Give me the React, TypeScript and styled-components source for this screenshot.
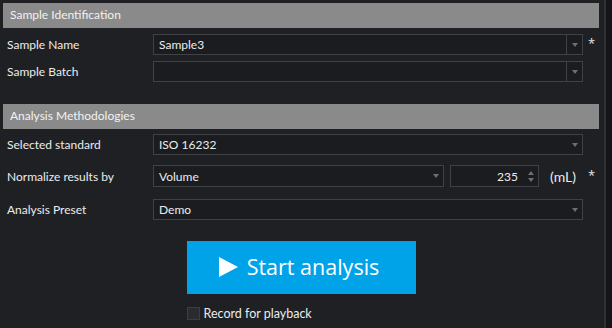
import React from 'react'
import styled, { createGlobalStyle } from 'styled-components'

const GlobalStyle = createGlobalStyle`
  html, body {
    margin: 0;
    padding: 0;
    background: #1f2024;
  }
  body {
    font-family: Lato, 'Open Sans', sans-serif;
    color: #e8e8e8;
  }
`

const Shell = styled.div`
  display: flex;
  width: 612px;
  height: 328px;
  overflow: hidden;
`

const Panel = styled.div`
  flex: 1;
  padding: 3px 5px 0 3px;
  border-right: 2px solid #303135;
  background: #1f2024;
`

const ScrollStrip = styled.div`
  width: 6px;
  background: #141518;
`

const SectionHeader = styled.div<{ $top?: number }>`
  height: 25px;
  line-height: 24px;
  margin-top: ${(p) => p.$top ?? 0}px;
  padding-left: 7px;
  background: #8a8a8a;
  color: #f2f2f2;
  font-size: 12px;
`

const SectionBody = styled.div<{ $pad: number }>`
  display: flex;
  flex-direction: column;
  padding-top: ${(p) => p.$pad}px;
`

const Row = styled.div<{ $gap?: number; $h?: number }>`
  display: flex;
  align-items: center;
  height: ${(p) => p.$h ?? 21}px;
  margin-top: ${(p) => p.$gap ?? 0}px;
`

const Label = styled.div`
  width: 146px;
  padding-left: 4px;
  flex-shrink: 0;
  font-size: 12px;
  color: #ececec;
`

const Field = styled.div<{ $w?: number }>`
  display: flex;
  align-items: stretch;
  box-sizing: border-box;
  height: 100%;
  ${(p) => (p.$w ? `width: ${p.$w}px; flex-shrink: 0;` : 'flex: 1;')}
  border: 1px solid #404145;
  background: #1b1c20;
`

const FieldText = styled.div<{ $right?: boolean }>`
  flex: 1;
  display: flex;
  align-items: center;
  justify-content: ${(p) => (p.$right ? 'flex-end' : 'flex-start')};
  padding: 0 5px;
  font-size: 12px;
  color: #ececec;
`

const ArrowBox = styled.div<{ $divider?: boolean }>`
  width: 15px;
  display: flex;
  align-items: center;
  justify-content: center;
  border-left: ${(p) => (p.$divider ? '1px solid #404145' : 'none')};
`

const Arrow = styled.div`
  width: 0;
  height: 0;
  border-left: 3px solid transparent;
  border-right: 3px solid transparent;
  border-top: 4px solid #6e6f73;
`

const Spinner = styled.div`
  width: 15px;
  display: flex;
  flex-direction: column;
  align-items: center;
  justify-content: center;
  gap: 3px;
`

const SpinUp = styled.div`
  width: 0;
  height: 0;
  border-left: 3px solid transparent;
  border-right: 3px solid transparent;
  border-bottom: 4px solid #6e6f73;
`

const Required = styled.div`
  width: 16px;
  flex-shrink: 0;
  padding: 0 0 3px 5px;
  box-sizing: border-box;
  font-family: 'Open Sans', sans-serif;
  font-size: 13px;
  color: #e8e8e8;
`

const Unit = styled.div`
  margin-left: 11px;
  font-size: 14px;
  color: #ececec;
  flex: 1;
`

const ActionArea = styled.div`
  display: flex;
  flex-direction: column;
  align-items: flex-start;
  width: 229px;
  margin: 21px auto 0;
`

const StartButton = styled.button`
  width: 229px;
  height: 53px;
  border: none;
  background: #00a2e8;
  color: #ffffff;
  display: flex;
  align-items: center;
  justify-content: center;
  gap: 9px;
  font-family: 'Open Sans', 'Noto Sans', sans-serif;
  font-size: 21.5px;
  padding: 0 4px 2px 0;
  cursor: pointer;
`

const Check = styled.label`
  display: flex;
  align-items: center;
  gap: 4px;
  margin-top: 12px;
  font-size: 12.5px;
  color: #ececec;
`

const Box = styled.span`
  width: 13px;
  height: 13px;
  box-sizing: border-box;
  border: 1px solid #3c3d41;
  background: #2a2b2f;
`

const Combo = ({ value, editable }: { value: string; editable?: boolean }) => (
  <Field>
    <FieldText>{value}</FieldText>
    <ArrowBox $divider={editable}>
      <Arrow />
    </ArrowBox>
  </Field>
)

const App = () => (
  <Shell>
    <GlobalStyle />
    <Panel>
      <SectionHeader>Sample Identification</SectionHeader>
      <SectionBody $pad={6}>
        <Row>
          <Label>Sample Name</Label>
          <Combo value="Sample3" editable />
          <Required>*</Required>
        </Row>
        <Row $gap={6}>
          <Label>Sample Batch</Label>
          <Combo value="" editable />
          <Required />
        </Row>
      </SectionBody>

      <SectionHeader $top={22}>Analysis Methodologies</SectionHeader>
      <SectionBody $pad={5}>
        <Row>
          <Label>Selected standard</Label>
          <Combo value="ISO 16232" />
          <Required />
        </Row>
        <Row $gap={10} $h={22}>
          <Label>Normalize results by</Label>
          <Field $w={291}>
            <FieldText>Volume</FieldText>
            <ArrowBox>
              <Arrow />
            </ArrowBox>
          </Field>
          <Field $w={89} style={{ marginLeft: 6 }}>
            <FieldText $right>235</FieldText>
            <Spinner>
              <SpinUp />
              <Arrow />
            </Spinner>
          </Field>
          <Unit>(mL)</Unit>
          <Required>*</Required>
        </Row>
        <Row $gap={12}>
          <Label>Analysis Preset</Label>
          <Combo value="Demo" />
          <Required />
        </Row>
      </SectionBody>

      <ActionArea>
        <StartButton>
          <svg width="19" height="20" viewBox="0 0 19 20">
            <polygon points="0,0 19,10 0,20" fill="#ffffff" />
          </svg>
          Start analysis
        </StartButton>
        <Check>
          <Box />
          Record for playback
        </Check>
      </ActionArea>
    </Panel>
    <ScrollStrip />
  </Shell>
)

export default App
